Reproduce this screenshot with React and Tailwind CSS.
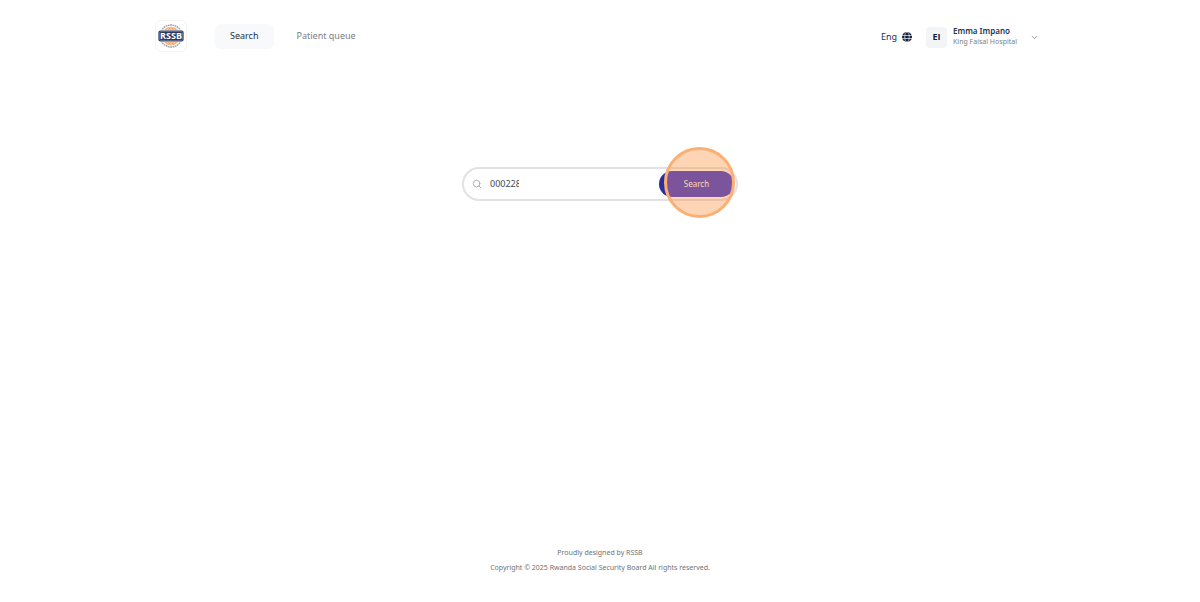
import { ChevronDown, Search } from "lucide-react";

function Logo() {
	return (
		<svg viewBox="0 0 32 32" className="w-8 h-8 shrink-0" role="img" aria-label="RSSB">
			<circle cx="16" cy="16" r="11" fill="none" stroke="#9aa0ae" strokeWidth="1.4" strokeDasharray="1.8 0.5" />
			<circle cx="16" cy="16" r="9.2" fill="#f7a058" />
			<g stroke="#fcd9b6" strokeWidth="0.7" fill="none">
				<path d="M16 7v18" />
				<ellipse cx="16" cy="16" rx="5" ry="9.2" />
			</g>
			<rect x="3" y="9.8" width="26" height="12.4" rx="2.4" fill="#ffffff" />
			<rect x="3.4" y="10.4" width="25.2" height="11.2" rx="2" fill="#26365f" />
			<rect x="4.6" y="11.6" width="22.8" height="8.8" rx="1" fill="none" stroke="#b9c0d0" strokeWidth="0.4" />
			<text
				x="16"
				y="19.4"
				textAnchor="middle"
				fontSize="9"
				fontWeight="700"
				fontFamily="Open Sans, sans-serif"
				fill="#ffffff"
			>
				RSSB
			</text>
		</svg>
	);
}

function Globe() {
	return (
		<svg viewBox="0 0 20 20" className="w-[10px] h-[10px]" aria-hidden="true">
			<circle cx="10" cy="10" r="10" fill="#14213d" />
			<g fill="none" stroke="#ffffff" strokeWidth="1.3">
				<path d="M0 7h20M0 13h20" />
				<ellipse cx="10" cy="10" rx="4.4" ry="10" />
			</g>
		</svg>
	);
}

function Navbar() {
	return (
		<header className="w-full max-w-[890px] mx-auto pt-5 flex items-start justify-between">
			<div className="flex items-start">
				<a href="#home" className="rounded-md border border-gray-100 w-8 h-8 flex items-center justify-center">
					<Logo />
				</a>
				<nav className="ml-7 pt-1 flex items-center gap-2 text-[9px] leading-4">
					<a href="#search" className="rounded-md bg-[#f7f9fb] text-[#1f2f46] h-[25px] px-[15px] pb-[2px] flex items-center">
						Search
					</a>
					<a href="#queue" className="text-[#7c8087] h-[25px] px-[15px] pb-[2px] flex items-center">
						Patient queue
					</a>
				</nav>
			</div>

			{/* language + account */}
			<div className="flex items-center pt-[5px] pr-[6px]">
				<button type="button" className="flex items-center gap-[5px] text-[9px] leading-4 text-[#25324b]">
					Eng
					<Globe />
				</button>
				<button type="button" className="ml-[14px] flex items-center text-left">
					<span className="w-[21px] h-[21px] rounded bg-[#f3f4f6] text-[#14213d] text-[9px] font-bold font-['Open_Sans',sans-serif] flex items-center justify-center">
						EI
					</span>
					<span className="ml-[6px] w-[69px] pb-[2px] flex flex-col whitespace-nowrap leading-[11px]">
						<span className="text-[8px] font-semibold text-[#25324b]">Emma Impano</span>
						<span className="text-[7px] text-[#7c8087]">King Faisal Hospital</span>
					</span>
					<ChevronDown className="ml-2 w-[9px] h-[9px] text-gray-500" />
				</button>
			</div>
		</header>
	);
}

function SearchBar() {
	return (
		<form
			onSubmit={(e) => e.preventDefault()}
			className="mt-[115px] mx-auto w-[276px] h-[34px] rounded-full border-2 border-[#e2e2e3] pl-2 pr-[2px] flex items-center"
		>
			<Search className="w-[10px] h-[10px] text-gray-400 shrink-0" />
			<input
				type="text"
				aria-label="Patient number"
				defaultValue="000228"
				className="flex-1 min-w-0 pl-2 pr-[140px] text-[9px] leading-4 text-[#3d4a5e] outline-none"
			/>
			<div className="relative shrink-0">
				<button
					type="submit"
					className="block w-[75px] h-[26px] rounded-full bg-linear-to-r from-[#2a2f9b] from-[5px] to-[#2829d4] to-[8px] text-white text-[8px]"
				>
					Search
				</button>
				{/* click marker */}
				<span className="absolute left-[5px] -top-6 w-[71px] h-[71px] rounded-full border-3 border-[#fbaf72] bg-[#fa9547]/40 pointer-events-none" />
			</div>
		</form>
	);
}

export default function App() {
	return (
		<div className="min-h-screen bg-white flex flex-col font-['Noto_Sans',sans-serif]">
			<Navbar />
			<main className="flex-1">
				<SearchBar />
			</main>
			<footer className="pb-[27px] text-center text-[7px] leading-[15px] text-[#6f7277]">
				<p>Proudly designed by RSSB</p>
				<p>Copyright © 2025 Rwanda Social Security Board All rights reserved.</p>
			</footer>
		</div>
	);
}
